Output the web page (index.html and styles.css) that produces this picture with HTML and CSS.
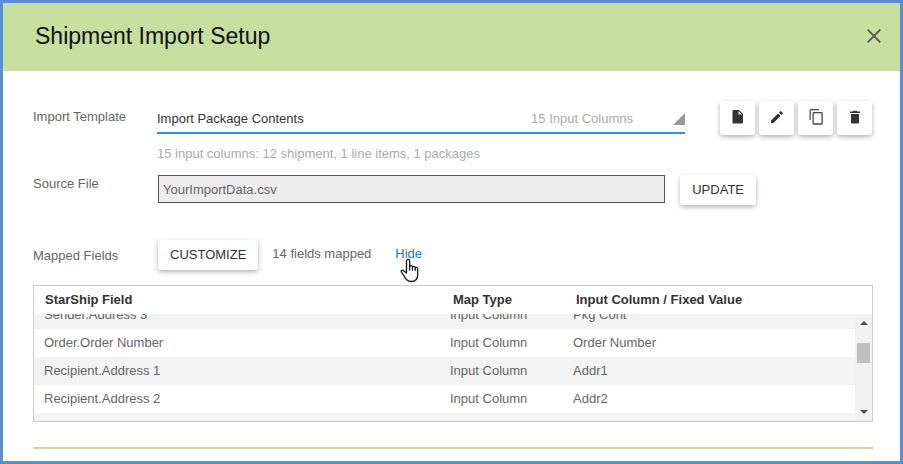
FILE: index.html
```html
<!DOCTYPE html>
<html lang="en">
<head>
<meta charset="utf-8">
<title>Shipment Import Setup</title>
<link rel="stylesheet" href="styles.css">
</head>
<body>
<main class="dialog">
  <header class="dialog-header">
    <h1>Shipment Import Setup</h1>
    <button class="close" aria-label="Close"><svg width="14" height="14" viewBox="0 0 14 14"><path d="M.7.7l12.6 12.6M13.3.7L.7 13.3" fill="none" stroke="#555" stroke-width="1.8"/></svg></button>
  </header>
  <div class="content">
    <div class="row template-row">
      <label class="label" for="template">Import Template</label>
      <div class="template">
        <div class="picker">
          <select id="template"><option>Import Package Contents</option></select>
          <span class="count">15 Input Columns</span>
          <svg class="corner" width="12" height="12" viewBox="0 0 12 12"><path d="M12 0v12H0z" fill="#999"/></svg>
        </div>
        <p class="hint">15 input columns: 12 shipment, 1 line items, 1 packages</p>
      </div>
      <div class="tools">
        <button class="btn tool" aria-label="New"><svg width="18" height="18" viewBox="0 0 18 18"><path fill="#333" d="M4.500 2H10l4 4v8.500a1 1 0 0 1-1 1H4.500a1 1 0 0 1-1-1V3a1 1 0 0 1 1-1z"/><path fill="#fff" d="M9.500 3v3.500H13z"/></svg></button>
        <button class="btn tool" aria-label="Edit"><svg width="18" height="18" viewBox="0 0 18 18"><path fill="#333" d="M3 12.600V15h2.400l7.100-7.100-2.400-2.400zM14.700 5.700a.6.6 0 0 0 0-.9l-1.500-1.500a.6.6 0 0 0-.9 0l-1.400 1.400 2.400 2.400z"/></svg></button>
        <button class="btn tool" aria-label="Copy"><svg width="18" height="18" viewBox="0 0 18 18"><path fill="none" stroke="#444" stroke-width="1.200" d="M3.100 12V2.600a1 1 0 0 1 1-1H12"/><rect x="6.100" y="4.600" width="9" height="11.400" rx=".8" fill="none" stroke="#444" stroke-width="1.300"/></svg></button>
        <button class="btn tool" aria-label="Delete"><svg width="18" height="18" viewBox="0 0 18 18"><path fill="#333" d="M5 6h8v8.200a1.300 1.300 0 0 1-1.300 1.300H6.300A1.300 1.300 0 0 1 5 14.200zM4 3.500h2.700l.8-.8h3l.8.8H14V5H4z"/></svg></button>
      </div>
    </div>
    <div class="row source-row">
      <label class="label" for="source">Source File</label>
      <input class="source" id="source" type="text" value="YourImportData.csv" readonly>
      <button class="btn">UPDATE</button>
    </div>
    <div class="row mapped-row">
      <span class="label">Mapped Fields</span>
      <button class="btn">CUSTOMIZE</button>
      <span class="mapped">14 fields mapped</span>
      <a class="hide" href="#fields">Hide<svg class="pointer" width="20" height="26" viewBox="0 0 20 26"><path fill="#fff" stroke="#15152a" stroke-width="1.300" stroke-linejoin="round" d="M6.500 15V3a1.600 1.600 0 0 1 3.200 0v5.300c.2-1 2.800-.9 2.800.7.300-1 2.700-.8 2.700.7.500-.8 2.500-.5 2.500 1.100v5.400c0 4.500-2.300 7.300-6.300 7.300-4.200 0-5.400-2.200-7.200-5.300L1.600 14.400c-1.100-1.800.6-2.900 2-1.700z"/><path fill="none" stroke="#15152a" stroke-width="1.200" d="M9.700 7v5.500M12.500 9v3.500M15.200 9.700v3.300"/></svg></a>
    </div>
    <div class="fields" id="fields">
      <table>
        <thead><tr><th>StarShip Field</th><th>Map Type</th><th>Input Column / Fixed Value</th></tr></thead>
        <tbody>
          <tr><td>Sender.Address 3</td><td>Input Column</td><td>Pkg Cont</td></tr>
          <tr><td>Order.Order Number</td><td>Input Column</td><td>Order Number</td></tr>
          <tr><td>Recipient.Address 1</td><td>Input Column</td><td>Addr1</td></tr>
          <tr><td>Recipient.Address 2</td><td>Input Column</td><td>Addr2</td></tr>
          <tr><td></td><td></td><td></td></tr>
        </tbody>
      </table>
      <div class="scrollbar">
        <svg width="8" height="4" viewBox="0 0 8 4"><path d="M4 0l4 4H0z" fill="#505050"/></svg>
        <div class="track"><div class="thumb"></div></div>
        <svg width="8" height="4" viewBox="0 0 8 4"><path d="M0 0h8L4 4z" fill="#505050"/></svg>
      </div>
    </div>
    <hr>
  </div>
</main>
</body>
</html>
```
FILE: styles.css
```css
* { box-sizing: border-box; }
body {
  margin: 0;
  font: 13px/18px "Liberation Sans", Arial, sans-serif;
  color: #666;
}
button, input, select { font: inherit; }
.dialog {
  min-height: 100vh;
  border: 3px solid #568fd6;
  background: #fff;
}
.dialog-header {
  display: flex;
  align-items: center;
  justify-content: space-between;
  height: 68px;
  padding: 0 18px 2px 32px;
  background: #c6df9e;
}
h1 {
  margin: 0;
  font-size: 23px;
  line-height: 28px;
  font-weight: 400;
  color: #111;
}
.close {
  display: flex;
  padding: 1px;
  border: 0;
  background: none;
}
.content { padding: 30px 27px 12px 30px; }
.row { display: flex; align-items: flex-start; }
.label { flex: 0 0 125px; }
.btn {
  height: 30px;
  padding: 0 12px;
  border: 0;
  border-radius: 3px;
  background: #fff;
  color: #333;
  box-shadow: 0 2px 5px rgba(0, 0, 0, .3);
}
.template-row { height: 74px; padding-right: 1px; }
.template-row .label { flex-basis: 124px; padding-top: 7px; }
.template { flex: 1; }
.picker {
  display: grid;
  grid-template-columns: 1fr auto 12px;
  column-gap: 40px;
  align-items: center;
  height: 33px;
  border-bottom: 2px solid #2196f3;
}
.picker select {
  grid-area: 1 / 1 / 2 / 4;
  width: 100%;
  height: 31px;
  padding: 4px 0 0;
  border: 0;
  appearance: none;
  background: none;
  color: #333;
}
.count { grid-area: 1 / 2; padding-top: 4px; color: #aaa; pointer-events: none; }
.corner { grid-area: 1 / 3; margin-top: 4px; pointer-events: none; }
.hint { margin: 11px 0 0; color: #aaa; }
.tools { display: flex; gap: 4px; margin-left: 35px; }
.tool {
  display: flex;
  align-items: center;
  justify-content: center;
  width: 35px;
  height: 34px;
  padding: 0 0 2px;
}
.source-row { height: 65px; padding-right: 117px; }
.source {
  flex: 1;
  min-width: 0;
  height: 28px;
  margin-right: 15px;
  padding: 0 4px;
  border: 1px solid #555;
  background: #ececec;
  color: #666;
}
.mapped-row { height: 45px; }
.mapped-row .label { padding-top: 7px; }
.mapped { padding-top: 5px; margin-left: 14px; }
.hide {
  position: relative;
  margin: 5px 0 0 24px;
  color: #1a7bc9;
  text-decoration: none;
}
.pointer { position: absolute; left: 5px; top: 13px; }
.fields {
  display: grid;
  grid-template-columns: 1fr 17px;
  grid-template-rows: 28px 107px;
  border: 1px solid #ccc;
}
table { display: block; grid-area: 1 / 1 / 3 / 2; }
thead, tbody { display: block; }
tr {
  display: grid;
  grid-template-columns: 406px 123px 1fr;
  height: 28px;
  padding-left: 10px;
}
thead tr { grid-template-columns: 408px 123px 1fr; padding-left: 11px; }
th, td { padding: 0; text-align: left; line-height: 28px; }
th { color: #333; }
tbody { height: 107px; overflow: hidden; }
tbody tr:first-child { margin-top: -13px; }
tbody tr:nth-child(odd) { background: #f3f3f3; }
.scrollbar {
  grid-area: 2 / 2;
  display: flex;
  flex-direction: column;
  align-items: center;
  padding: 7px 0;
  background: #f1f1f1;
}
.track { flex: 1; width: 13px; padding-top: 18px; }
.thumb { height: 20px; background: #c1c1c1; }
hr { height: 2px; margin: 25px 0 0; border: 0; background: #c6df9e; }
```
